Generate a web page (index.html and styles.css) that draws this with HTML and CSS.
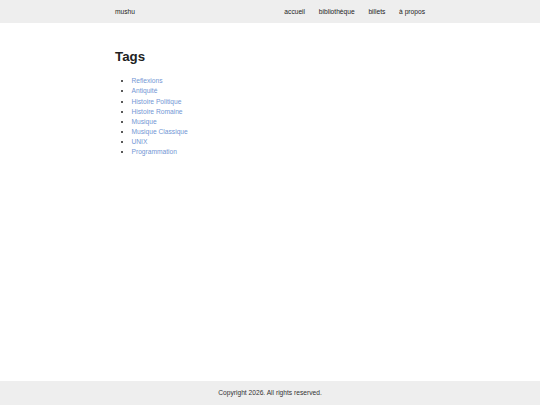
FILE: index.html
```html
<!DOCTYPE html>
<html lang="fr">
<head>
    <meta charset="UTF-8">
    <meta name="viewport" content="width=device-width, initial-scale=1.0">
    <title>Tags - mushu</title>
    <link rel="stylesheet" href="styles.css">
</head>
<body>
    <header class="site-header">
        <div class="container header-inner">
            <a class="brand" href="#">mushu</a>
            <nav class="main-nav">
                <a href="#">accueil</a>
                <a href="#">bibliothèque</a>
                <a href="#">billets</a>
                <a href="#">à propos</a>
            </nav>
        </div>
    </header>

    <main class="container content">
        <h1>Tags</h1>
        <ul class="tag-list">
            <li><a href="#">Reflexions</a></li>
            <li><a href="#">Antiquité</a></li>
            <li><a href="#">Histoire Politique</a></li>
            <li><a href="#">Histoire Romaine</a></li>
            <li><a href="#">Musique</a></li>
            <li><a href="#">Musique Classique</a></li>
            <li><a href="#">UNIX</a></li>
            <li><a href="#">Programmation</a></li>
        </ul>
    </main>

    <footer class="site-footer">
        <p>Copyright 2026. All rights reserved.</p>
    </footer>
</body>
</html>
```

FILE: styles.css
```css
body {
    font-family: "Liberation Sans", Arial, sans-serif;
    font-size: 6.67px;
    line-height: 1.5;
    color: #222;
    margin: 0;
    padding: 0;
    display: flex;
    flex-direction: column;
    min-height: 100vh;
    background-color: white;
}

a {
    color: #222;
    text-decoration: none;
}

.container {
    width: 310px;
    margin: 0 auto;
}

.site-header {
    background-color: #eeeeee;
    height: 23px;
}

.header-inner {
    display: flex;
    justify-content: space-between;
    align-items: center;
    height: 100%;
}

.main-nav {
    display: flex;
    gap: 13.7px;
}

.content {
    flex: 1;
    padding-top: 26px;
}

h1 {
    font-size: 13.3px;
    line-height: 1.15;
    margin: 0 0 12px;
    color: #222;
}

.tag-list {
    margin: 0;
    padding-left: 16.5px;
    line-height: 10.15px;
}

.tag-list a {
    color: #7396d4;
}

.site-footer {
    background-color: #eeeeee;
    height: 24px;
    display: flex;
    justify-content: center;
    align-items: center;
}

.site-footer p {
    margin: 0;
    color: #333;
}
```
